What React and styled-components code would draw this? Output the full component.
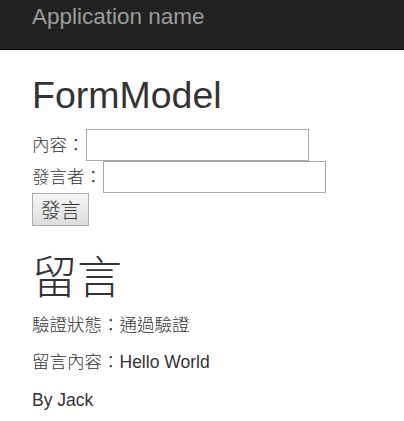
import React from "react";
import styled, { createGlobalStyle } from "styled-components";

const Global = createGlobalStyle`
  html, body { margin: 0; padding: 0; background: #fff; }
  body {
    font-family: "Liberation Sans", Arial, "Noto Sans CJK TC", sans-serif;
    font-size: 17.5px;
    font-weight: 300;
    line-height: 25px;
    color: #333;
  }
`;

const Navbar = styled.header`
  height: 49px;
  background: #222;
  border-bottom: 1px solid #080808;
  padding: 0 32px;
`;

const Brand = styled.a`
  display: block;
  font-size: 22.5px;
  font-weight: 400;
  line-height: 34px;
  color: #9d9d9d;
  text-decoration: none;
`;

const Container = styled.main`
  padding: 0 32px;
`;

const Title = styled.h2`
  margin: 25px 0 13px;
  font-size: 37.5px;
  line-height: 41px;
  font-weight: 400;
`;

const Form = styled.form`
  display: flex;
  flex-direction: column;
  align-items: flex-start;
`;

const Row = styled.div`
  display: flex;
  align-items: center;
  height: 32px;
`;

const Label = styled.label`
  margin-right: 1px;
  white-space: nowrap;
`;

const Input = styled.input`
  box-sizing: border-box;
  width: 223px;
  height: 32px;
  border: 1px solid #a9a9a9;
  background: #fff;
  margin: 0;
  padding: 2px 4px;
  font: inherit;
`;

const Button = styled.button`
  box-sizing: border-box;
  width: 57px;
  height: 33px;
  margin: 0;
  padding: 0;
  border: 1px solid #adadad;
  border-radius: 0;
  background: linear-gradient(#f7f7f7, #dcdcdc);
  color: #333;
  font-family: "Noto Sans CJK TC", sans-serif;
  font-size: 20px;
  font-weight: 300;
  line-height: 31px;
`;

const Heading = styled.h1`
  margin: 28px 0 9px;
  font-size: 45px;
  line-height: 49.5px;
  font-weight: 300;
`;

const Para = styled.p`
  margin: 0 0 12.5px;
`;

export default function App() {
  return (
    <>
      <Global />
      <Navbar>
        <Brand href="#">Application name</Brand>
      </Navbar>
      <Container>
        <Title>FormModel</Title>
        <Form onSubmit={(e) => e.preventDefault()}>
          <Row>
            <Label>內容：</Label>
            <Input type="text" />
          </Row>
          <Row>
            <Label>發言者：</Label>
            <Input type="text" />
          </Row>
          <Button type="submit">發言</Button>
        </Form>
        <Heading>留言</Heading>
        <Para>驗證狀態：通過驗證</Para>
        <Para>留言內容：Hello World</Para>
        <Para>By Jack</Para>
      </Container>
    </>
  );
}
